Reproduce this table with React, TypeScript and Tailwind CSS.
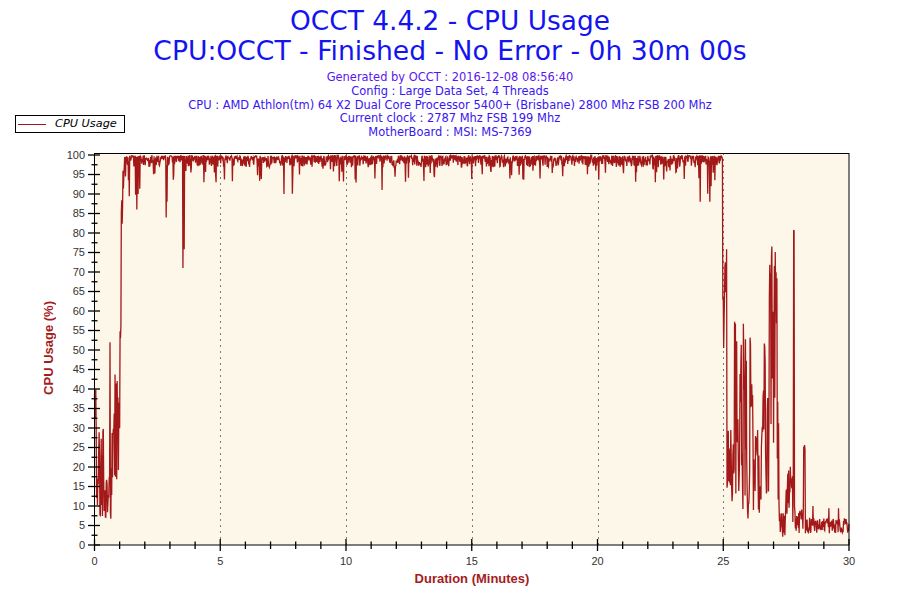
import { useMemo } from "react";

const PLOT_L = 94.5;
const PLOT_R = 849;
const PLOT_T = 153.5;
const PLOT_B = 545;
const RED = "#a31818";

function mulberry32(seed: number) {
  let a = seed;
  return () => {
    a |= 0;
    a = (a + 0x6d2b79f5) | 0;
    let t = Math.imul(a ^ (a >>> 15), 1 | a);
    t = (t + Math.imul(t ^ (t >>> 7), 61 | t)) ^ t;
    return ((t ^ (t >>> 14)) >>> 0) / 4294967296;
  };
}

const xOf = (min: number) => PLOT_L + (min / 30) * (PLOT_R - PLOT_L);
const yOf = (v: number) => PLOT_B - v * 3.9;

// [from px, to px, low, high]
const segments: [number, number, number, number][] = [
  [94, 96, 30, 40],
  [96, 104, 5, 30],
  [104, 112, 6, 20],
  [112, 120, 15, 45],
  [120, 121, 50, 57],
  [121, 124, 73, 97],
  [722.5, 723.5, 62, 64],
  [723.5, 727, 45, 76],
  [727, 734, 10, 30],
  [734, 747, 8, 58],
  [747, 750, 5, 20],
  [750, 753, 30, 61],
  [753, 762, 8, 30],
  [762, 766, 20, 68],
  [766, 769, 10, 40],
  [769, 777, 25, 77],
  [777, 779, 10, 40],
  [779, 786, 2, 10],
  [786, 793.5, 5, 21],
  [793.5, 794.5, 79, 81],
  [794.5, 803.5, 3, 10],
  [803.5, 805, 24, 26],
  [805, 850, 3, 7],
];

const dips: [number, number][] = [
  [110, 52], [137, 86], [138, 90], [166, 84], [167, 88], [183, 71], [184, 76],
  [216, 93], [284, 90], [375, 94], [382, 91], [540, 94], [596, 96], [670, 96],
  [700, 88], [710, 88], [711, 92],
];

function useSeries() {
  return useMemo(() => {
    const rand = mulberry32(20161208);
    const n = 1800;
    const pts: string[] = [];
    for (let i = 0; i <= n; i++) {
      const px = PLOT_L + (i * (PLOT_R - PLOT_L)) / n;
      let v: number;
      const seg = segments.find((s) => px >= s[0] && px < s[1]);
      if (seg) {
        v = seg[2] + rand() * (seg[3] - seg[2]);
        if (seg[0] === 805 && rand() < 0.06) v = 8 + rand() * 3;
      } else {
        const r = rand();
        v = 99.8 - Math.pow(rand(), 2) * 3;
        if (r < 0.05) v = 93 + rand() * 4;
        else if (r < 0.058) v = 89 + rand() * 4;
      }
      const d = dips.find((q) => Math.abs(q[0] - px) < 0.22);
      if (d) v = d[1];
      pts.push(`${px.toFixed(2)},${yOf(v).toFixed(2)}`);
    }
    return pts.join(" ");
  }, []);
}

function Chart() {
  const points = useSeries();
  const yMajor = Array.from({ length: 21 }, (_, i) => i * 5);
  const yMinor = Array.from({ length: 20 }, (_, i) => i * 5 + 2.5);
  const xMinor = Array.from({ length: 31 }, (_, i) => i).filter((m) => m % 5 !== 0);
  const xMajor = [0, 5, 10, 15, 20, 25, 30];

  return (
    <svg width={840} height={430} viewBox="60 140 840 430" className="block">
      <rect x={PLOT_L} y={PLOT_T} width={PLOT_R - PLOT_L} height={PLOT_B - PLOT_T} fill="#fdf7ea" />
      {[5, 10, 15, 20, 25].map((m) => (
        <line
          key={m}
          x1={Math.round(xOf(m)) + 0.5}
          x2={Math.round(xOf(m)) + 0.5}
          y1={PLOT_T}
          y2={PLOT_B}
          stroke="#000"
          strokeWidth={1}
          strokeDasharray="1 5"
        />
      ))}
      <polyline points={points} fill="none" stroke={RED} strokeWidth={1.3} strokeLinejoin="miter" />
      <rect
        x={PLOT_L}
        y={PLOT_T}
        width={PLOT_R - PLOT_L}
        height={PLOT_B - PLOT_T}
        fill="none"
        stroke="#000"
        strokeWidth={1}
      />
      {yMajor.map((v) => (
        <g key={v}>
          <line x1={88} x2={100} y1={yOf(v)} y2={yOf(v)} stroke="#000" strokeWidth={1.3} />
          <text
            x={85}
            y={yOf(v) + 3.8}
            textAnchor="end"
            fontSize={11}
            fill="#333"
            fontFamily="'Liberation Sans', Arial, sans-serif"
          >
            {v}
          </text>
        </g>
      ))}
      {yMinor.map((v) => (
        <line key={v} x1={91.5} x2={97.5} y1={yOf(v)} y2={yOf(v)} stroke="#000" strokeWidth={1.3} />
      ))}
      {xMinor.map((m) => (
        <line key={m} x1={xOf(m)} x2={xOf(m)} y1={541.5} y2={549} stroke="#000" strokeWidth={1.3} />
      ))}
      {xMajor.map((m) => (
        <g key={m}>
          <line x1={xOf(m)} x2={xOf(m)} y1={539} y2={551} stroke="#000" strokeWidth={1.3} />
          <text
            x={xOf(m)}
            y={565}
            textAnchor="middle"
            fontSize={11}
            fill="#333"
            fontFamily="'Liberation Sans', Arial, sans-serif"
          >
            {m}
          </text>
        </g>
      ))}
    </svg>
  );
}

export default function App() {
  return (
    <div className="relative h-[600px] w-[900px] overflow-hidden bg-white">
      <header className="flex h-[140px] flex-col items-center pt-[6px] [font-family:'DejaVu_Sans',Verdana,sans-serif]">
        <h1 className="text-[26.4px] leading-[30px] text-[#1414f0]">OCCT 4.4.2 - CPU Usage</h1>
        <h2 className="text-[26.6px] leading-[30px] text-[#1414f0]">
          CPU:OCCT - Finished - No Error - 0h 30m 00s
        </h2>
        <div className="mt-[5px] flex flex-col items-center text-[11.45px] leading-[13.75px] text-[#3a16f0]">
          <span className="text-[#5a16f0]">Generated by OCCT : 2016-12-08 08:56:40</span>
          <span>Config : Large Data Set, 4 Threads</span>
          <span>CPU : AMD Athlon(tm) 64 X2 Dual Core Processor 5400+ (Brisbane) 2800 Mhz FSB 200 Mhz</span>
          <span>Current clock : 2787 Mhz FSB 199 Mhz</span>
          <span>MotherBoard : MSI: MS-7369</span>
        </div>
      </header>

      <div className="absolute left-[15px] top-[115px] flex h-[18px] w-[110px] items-center border border-black bg-white pl-[2px]">
        <span className="h-px w-[28px] bg-[#a31818]" />
        <span className="ml-[9px] text-[11.3px] italic leading-none text-black [font-family:'DejaVu_Sans',Verdana,sans-serif]">
          CPU Usage
        </span>
      </div>

      <div className="flex">
        <div className="flex h-[430px] w-[60px] items-center justify-end pb-[14px] pr-[4px]">
          <span className="rotate-180 whitespace-nowrap text-[13px] font-bold leading-[15px] text-[#a51c1c] [writing-mode:vertical-rl] [font-family:'Liberation_Sans',Arial,sans-serif]">
            CPU Usage (%)
          </span>
        </div>
        <Chart />
      </div>

      <div className="mt-[1px] flex justify-center pl-[44px]">
        <span className="text-[13px] font-bold leading-[16px] text-[#a51c1c] [font-family:'Liberation_Sans',Arial,sans-serif]">
          Duration (Minutes)
        </span>
      </div>
    </div>
  );
}
